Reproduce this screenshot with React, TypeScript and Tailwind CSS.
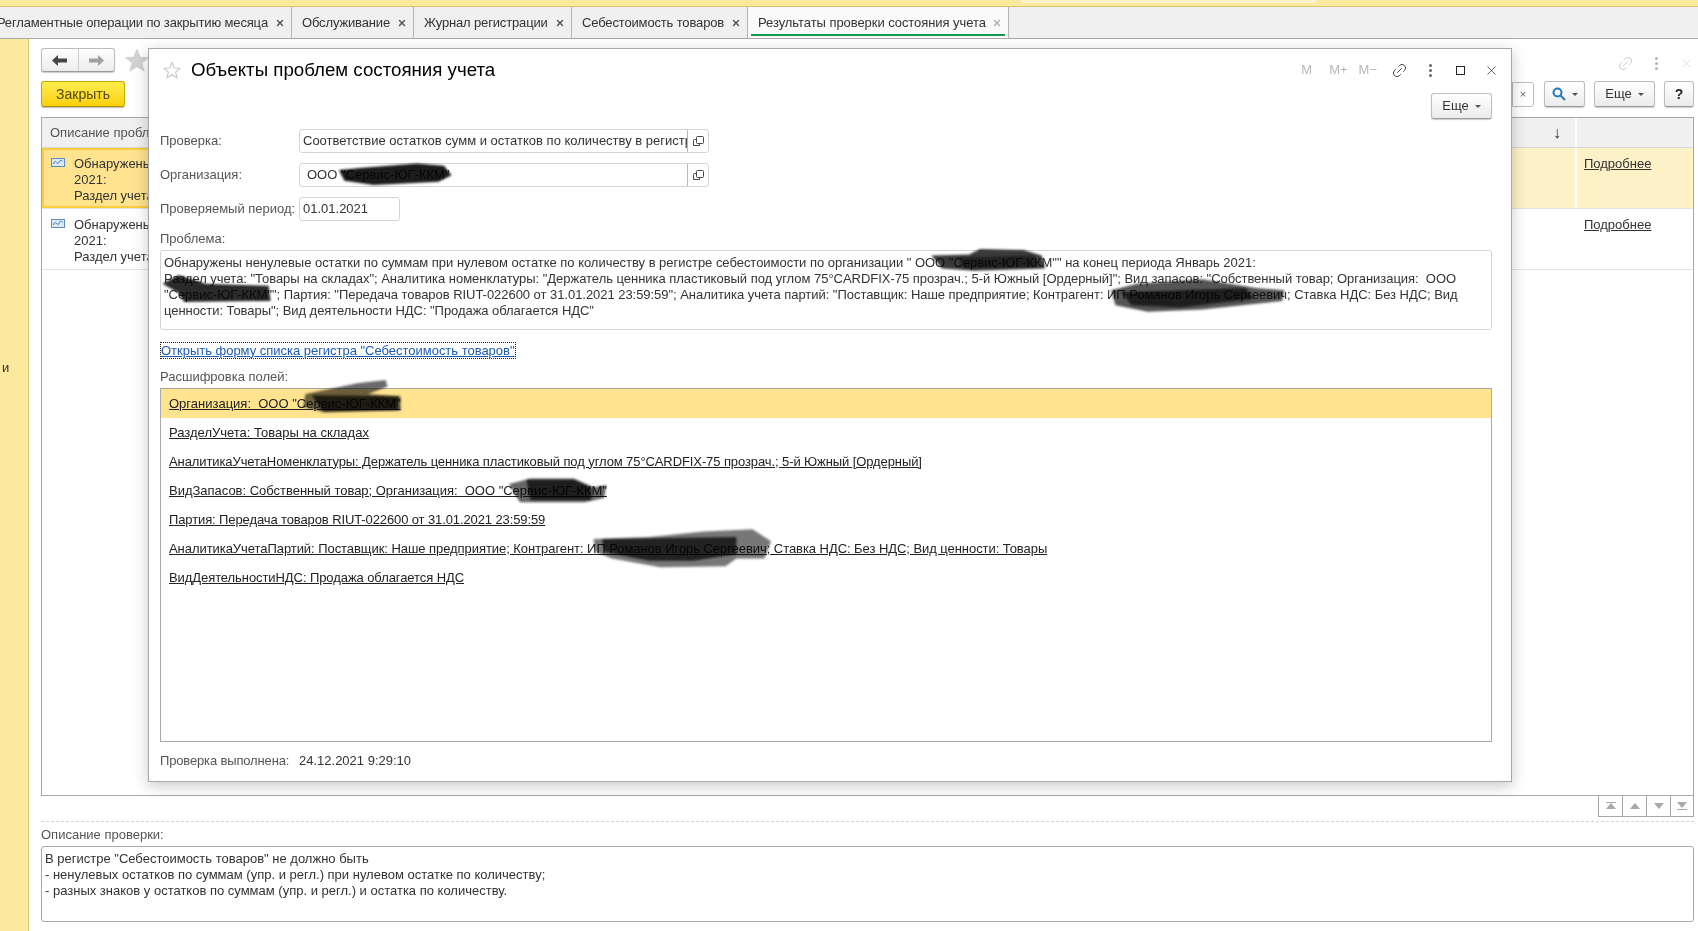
import { Link2, X } from "lucide-react";

const FONT = "font-['Liberation_Sans',Arial,sans-serif]";

const tabs = [
  { label: "Регламентные операции по закрытию месяца", width: "w-[292px] justify-end gap-[7px]" },
  { label: "Обслуживание", width: "w-[122px] justify-between pl-[10px]" },
  { label: "Журнал регистрации", width: "w-[158px] justify-between pl-[10px]" },
  { label: "Себестоимость товаров", width: "w-[176px] justify-between pl-[10px]" },
];

const fieldRows = [
  { text: "Организация:  ООО \"Сервис-ЮГ-ККМ\"", cls: "" },
  { text: "РазделУчета: Товары на складах", cls: "" },
  { text: "АналитикаУчетаНоменклатуры: Держатель ценника пластиковый под углом 75°CARDFIX-75 прозрач.; 5-й Южный [Ордерный]", cls: "tracking-[-0.096px]" },
  { text: "ВидЗапасов: Собственный товар; Организация:  ООО \"Сервис-ЮГ-ККМ\"", cls: "tracking-[-0.017px]" },
  { text: "Партия: Передача товаров RIUT-022600 от 31.01.2021 23:59:59", cls: "tracking-[-0.11px]" },
  { text: "АналитикаУчетаПартий: Поставщик: Наше предприятие; Контрагент: ИП Романов Игорь Сергеевич; Ставка НДС: Без НДС; Вид ценности: Товары", cls: "tracking-[-0.057px]" },
  { text: "ВидДеятельностиНДС: Продажа облагается НДС", cls: "tracking-[-0.077px]" },
];

function StarIcon({ size, fill, stroke }: { size: number; fill: string; stroke: string }) {
  return (
    <svg width={size} height={size} viewBox="0 0 24 24" fill={fill} stroke={stroke} strokeWidth="1.4">
      <path d="M12 2l3 7.2 7.6.6-5.8 5 1.8 7.5L12 18.3l-6.6 4 1.8-7.5-5.8-5 7.6-.6z" />
    </svg>
  );
}

function ThreeDots({ color }: { color: string }) {
  return (
    <span className="flex flex-col gap-[2px]">
      <span className="w-[3px] h-[3px] rounded-full" style={{ backgroundColor: color }} />
      <span className="w-[3px] h-[3px] rounded-full" style={{ backgroundColor: color }} />
      <span className="w-[3px] h-[3px] rounded-full" style={{ backgroundColor: color }} />
    </span>
  );
}

function Caret() {
  return <span className="w-0 h-0 border-x-[3px] border-x-transparent border-t-[3px] border-t-[#555]" />;
}

function GrayButton({ className, children }: { className: string; children: React.ReactNode }) {
  return (
    <div
      className={`flex items-center justify-center rounded-[3px] border border-[#bdbdbd] border-b-[#9a9a9a] bg-gradient-to-b from-white to-[#ececec] shadow-[0_1px_1px_rgba(0,0,0,0.2)] ${className}`}
    >
      {children}
    </div>
  );
}

function OpenIcon() {
  return (
    <svg width="11" height="11" viewBox="0 0 11 11" fill="none" stroke="#444" strokeWidth="1">
      <path d="M3.5 3.5H1.5a1 1 0 0 0-1 1v5h6V8" />
      <rect x="3.5" y="0.5" width="7" height="7" rx="1" />
    </svg>
  );
}

function PagerIcon({ kind }: { kind: "first" | "up" | "down" | "last" }) {
  return (
    <svg width="10" height="8" viewBox="0 0 10 8" fill="#a8a8a8">
      {kind === "first" && <path d="M0 0h10v1H0zM5 1l5 6H0z" />}
      {kind === "up" && <path d="M5 1l5 6H0z" />}
      {kind === "down" && <path d="M0 1h10L5 7z" />}
      {kind === "last" && <path d="M0 0h10L5 6zM0 7h10v1H0z" />}
    </svg>
  );
}

function ProblemRow({ selected }: { selected: boolean }) {
  return (
    <div className={`flex h-[61px] border-b border-[#e4e4e4] ${selected ? "bg-[#fdf1c8]" : "bg-white"}`}>
      <div className={`flex w-[107px] overflow-hidden ${selected ? "h-[60px] border-2 border-r-0 border-[#fbcd3c] bg-[#ffe38f] pl-[7px] pt-[6px]" : "pl-[9px] pt-[8px]"}`}>
        <svg width="14" height="9" viewBox="0 0 14 9" className="mt-[2px] shrink-0">
          <rect x="0.5" y="0.5" width="13" height="8" fill="#dbe8f6" stroke="#5b8fc4" />
          <path d="M2.5 6c1-3 2-3 3-1.500s2 1 3-1 1.500-1 3-.5" fill="none" stroke="#2f6fb0" />
        </svg>
        <div className="ml-[9px] leading-[16px] text-[#333] whitespace-nowrap">
          <div>Обнаружены</div>
          <div>2021:</div>
          <div>Раздел учета</div>
        </div>
      </div>
      <div className="flex-1" />
      <div className="w-[118px] border-l-2 border-white pl-[7px] pt-[6px]">
        <span className="underline text-[#333] leading-[16px]">Подробнее</span>
      </div>
    </div>
  );
}

// marker strokes over the blanked-out names, in the coordinates of the 1568 wide view
function Scribbles() {
  return (
    <svg className="absolute inset-0 w-full h-full pointer-events-none mix-blend-multiply blur-[1px]" viewBox="0 0 1568 860" preserveAspectRatio="none">
      {/* org field */}
      <path d="M313 157L335 155L385 151L410 153L417 162L405 168L345 171L318 167Z" fill="#1c1c1c" />
      {/* problem text, line 1 */}
      <path d="M860 236L895 235L905 230L945 231L962 236L965 248L900 250L870 248Z" fill="#3a3a3a" />
      <path d="M885 238L955 236L958 247L890 248Z" fill="#222" />
      {/* problem text, line 2-3 */}
      <path d="M150 262L165 254L190 262L248 264L250 278L170 279L164 270Z" fill="#2a2a2a" />
      {/* problem text, line 3 right */}
      <path d="M1026 268L1050 262L1110 258L1160 266L1186 268L1184 278L1110 286L1060 288L1030 282Z" fill="#555" />
      <path d="M1035 270L1150 266L1158 276L1090 284L1045 282Z" fill="#1e1e1e" />
      {/* list row 1 */}
      <path d="M282 364L330 354L356 351L358 357L340 364L370 366L370 379L300 381L280 376Z" fill="#6a6a6a" />
      <path d="M288 365L368 366L368 379L298 380Z" fill="#1e1e1e" />
      {/* list row 4 */}
      <path d="M470 447L490 442L530 442L548 450L560 448L558 460L540 464L480 464Z" fill="#666" />
      <path d="M486 443L530 443L546 450L546 462L490 462Z" fill="#1e1e1e" />
      {/* list row 6 */}
      <path d="M548 498L600 496L650 491L695 489L712 500L706 516L680 516L670 523L610 524L565 516L550 510Z" fill="#777" />
      <path d="M556 498L680 496L680 512L640 518L600 518L558 510Z" fill="#222" />
    </svg>
  );
}

export default function App() {
  return (
    <div className={`relative w-[1698px] h-[931px] overflow-hidden bg-white text-[13px] text-[#333] ${FONT}`}>
      {/* Top strip */}
      <div className="relative h-[7px] bg-[#fbe99d] border-b border-[#d6c66f]">
        <div className="absolute left-[1021px] top-0 w-[296px] h-[3px] rounded-b-[2px] bg-[#fdf4cc]" />
      </div>

      {/* Tabs */}
      <div className="flex h-[32px] bg-[#f0f0f0] border-b border-[#a8a8a8]">
        {tabs.map((t) => (
          <div key={t.label} className={`flex shrink-0 items-center pr-[6px] border-r border-[#b4b4b4] whitespace-nowrap ${t.width}`}>
            <span className="tracking-[-0.15px]">{t.label}</span>
            <X size={10} strokeWidth={3.4} className="text-[#555] shrink-0" />
          </div>
        ))}
        <div className="relative flex shrink-0 items-center justify-between w-[261px] h-[31px] pl-[10px] pr-[6px] bg-[#fafafa] border-r border-[#b4b4b4] whitespace-nowrap">
          <span className="tracking-[-0.06px]">Результаты проверки состояния учета</span>
          <X size={10} strokeWidth={3.4} className="text-[#b0b0b0] shrink-0" />
          <div className="absolute left-[3px] right-[3px] bottom-[2px] h-[2px] bg-[#0e9a4a]" />
        </div>
      </div>

      {/* Body */}
      <div className="flex h-[892px]">
        <div className="relative w-[29px] bg-[#fbe99d] border-r border-[#d6c66f]">
          <span className="absolute left-[2px] top-[319px]">и</span>
        </div>

        <div className="flex-1 pl-[12px] pr-[4px] flex flex-col">
          {/* Upper toolbar */}
          <div className="flex items-center h-[24px] mt-[9px]">
            <GrayButton className="w-[74px] h-[24px]">
              <span className="flex-1 flex justify-center border-r border-[#cfcfcf] h-full items-center">
                <svg width="15" height="11" viewBox="0 0 15 11" fill="#444"><path d="M0 5.500L6 0v3.500h9v4H6V11z" /></svg>
              </span>
              <span className="flex-1 flex justify-center h-full items-center">
                <svg width="15" height="11" viewBox="0 0 15 11" fill="#a0a0a0"><path d="M15 5.500L9 0v3.500H0v4h9V11z" /></svg>
              </span>
            </GrayButton>
            <span className="ml-[10px]"><StarIcon size={24} fill="#d2d2d2" stroke="#d2d2d2" /></span>
            <div className="flex-1" />
            <div className="flex items-center text-[#c2c2c2] mt-[6px]">
              <Link2 size={17} strokeWidth={1.2} className="-rotate-45" />
              <span className="ml-[21px]"><ThreeDots color="#b4b4b4" /></span>
              <X size={13} strokeWidth={1} className="ml-[22px] mr-[1px]" />
            </div>
          </div>

          {/* Lower toolbar */}
          <div className="flex items-center h-[26px] mt-[9px]">
            <div className="flex items-center justify-center w-[84px] h-[26px] rounded-[3px] border border-[#c9a800] border-b-[#a89000] bg-gradient-to-b from-[#ffee4a] to-[#fad000] shadow-[0_1px_1px_rgba(0,0,0,0.25)] text-[14px] text-[#554a00]">
              Закрыть
            </div>
            <div className="flex-1" />
            <div className="flex items-center justify-center w-[22px] h-[25px] border border-[#bdbdbd] rounded-r-[3px] text-[#666] text-[11px]">×</div>
            <GrayButton className="w-[41px] h-[26px] ml-[10px] gap-[6px]">
              <svg width="14" height="14" viewBox="0 0 14 14" fill="none" stroke="#2a78b8" strokeWidth="2"><circle cx="5.500" cy="5.500" r="4" /><path d="M8.500 8.500l4.500 4.500" /></svg>
              <Caret />
            </GrayButton>
            <GrayButton className="w-[61px] h-[26px] ml-[9px] gap-[6px]">
              <span>Еще</span>
              <Caret />
            </GrayButton>
            <GrayButton className="w-[30px] h-[26px] ml-[9px] font-bold text-[14px] text-[#222]">?</GrayButton>
          </div>

          {/* Table */}
          <div className="mt-[10px] h-[679px] border border-[#a8a8a8] flex flex-col">
            <div className="flex h-[30px] bg-[#f0f0f0] border-b border-[#d8d8d8]">
              <div className="pl-[8px] pt-[5px] text-[#555] w-[107px] overflow-hidden whitespace-nowrap">Описание проблемы</div>
              <div className="flex-1 flex justify-end items-center pr-[14px] border-r-2 border-white">
                <span className="text-[16px] leading-none">↓</span>
              </div>
              <div className="w-[116px]" />
            </div>
            <ProblemRow selected />
            <ProblemRow selected={false} />
          </div>

          {/* Pager */}
          <div className="flex justify-end h-[21px]">
            {(["first", "up", "down", "last"] as const).map((k) => (
              <div key={k} className="flex items-center justify-center w-[24px] border-l border-b border-[#a8a8a8] last:border-r">
                <PagerIcon kind={k} />
              </div>
            ))}
          </div>

          <div className="mt-[4px] border-t border-dashed border-[#d4d4d4]" />

          <div className="mt-[5px] h-[19px] leading-[16px] text-[#555]">Описание проверки:</div>
          <div className="h-[76px] border border-[#a8a8a8] rounded-[3px] px-[3px] pt-[4px] leading-[16px] text-[#333]">
            <div>В регистре "Себестоимость товаров" не должно быть</div>
            <div>- ненулевых остатков по суммам (упр. и регл.) при нулевом остатке по количеству;</div>
            <div>- разных знаков у остатков по суммам (упр. и регл.) и остатка по количеству.</div>
          </div>
        </div>
      </div>

      {/* Modal */}
      <div className="absolute left-[148px] top-[48px] w-[1364px] h-[734px] bg-white border border-[#a8a8a8] shadow-[0_4px_14px_rgba(0,0,0,0.22)] pl-[11px] pr-[19px] flex flex-col">
        <div className="flex items-center h-[42px]">
          <span className="ml-[3px]"><StarIcon size={18} fill="none" stroke="#c4c4c4" /></span>
          <span className="ml-[10px] text-[18.7px] text-black whitespace-nowrap">Объекты проблем состояния учета</span>
          <div className="flex-1" />
          <div className="flex items-center text-[#b8b8b8] text-[13px]">
            <span>M</span>
            <span className="ml-[17px]">M+</span>
            <span className="ml-[11px]">M−</span>
            <Link2 size={17} strokeWidth={1.2} className="-rotate-45 ml-[14px] text-[#333]" />
            <span className="ml-[21px]"><ThreeDots color="#666" /></span>
            <span className="ml-[24px] w-[9px] h-[9px] border border-[#222]" />
            <X size={15} strokeWidth={1.1} className="ml-[19px] -mr-[7px] text-[#222]" />
          </div>
        </div>

        <div className="flex justify-end mt-[2px]">
          <GrayButton className="w-[61px] h-[26px] gap-[6px]">
            <span>Еще</span>
            <Caret />
          </GrayButton>
        </div>

        {/* Fields */}
        <div className="flex items-center h-[24px] mt-[10px]">
          <span className="w-[139px] text-[#555]">Проверка:</span>
          <div className="flex items-center w-[410px] h-[24px] border border-[#d4d4d4] rounded-[3px]">
            <div className="flex-1 min-w-0 overflow-hidden whitespace-nowrap pl-[3px] text-[#333]">
              Соответствие остатков сумм и остатков по количеству в регистре
            </div>
            <div className="flex items-center justify-center w-[21px] h-full border-l border-[#b8b8b8]">
              <OpenIcon />
            </div>
          </div>
        </div>
        <div className="flex items-center h-[24px] mt-[10px]">
          <span className="w-[139px] text-[#555]">Организация:</span>
          <div className="flex items-center w-[410px] h-[24px] border border-[#d4d4d4] rounded-[3px]">
            <div className="flex-1 whitespace-nowrap pl-[7px] text-[#333]">ООО "Сервис-ЮГ-ККМ"</div>
            <div className="flex items-center justify-center w-[21px] h-full border-l border-[#b8b8b8]">
              <OpenIcon />
            </div>
          </div>
        </div>
        <div className="flex items-center h-[24px] mt-[10px]">
          <span className="w-[139px] text-[#555] whitespace-nowrap">Проверяемый период:</span>
          <div className="flex items-center w-[101px] h-[24px] border border-[#d4d4d4] rounded-[3px] pl-[3px]">01.01.2021</div>
        </div>

        <div className="h-[16px] mt-[10px] leading-[16px] text-[#555]">Проблема:</div>
        <div className="h-[80px] mt-[3px] border border-[#d4d4d4] rounded-[3px] px-[3px] pt-[4px] leading-[16px] whitespace-pre">
          <div className="tracking-[-0.026px]">Обнаружены ненулевые остатки по суммам при нулевом остатке по количеству в регистре себестоимости по организации " ООО "Сервис-ЮГ-ККМ"" на конец периода Январь 2021:</div>
          <div className="tracking-[-0.03px]">Раздел учета: "Товары на складах"; Аналитика номенклатуры: "Держатель ценника пластиковый под углом 75°CARDFIX-75 прозрач.; 5-й Южный [Ордерный]"; Вид запасов: "Собственный товар; Организация:  ООО</div>
          <div className="tracking-[-0.04px]">"Сервис-ЮГ-ККМ""; Партия: "Передача товаров RIUT-022600 от 31.01.2021 23:59:59"; Аналитика учета партий: "Поставщик: Наше предприятие; Контрагент: ИП Романов Игорь Сергеевич; Ставка НДС: Без НДС; Вид</div>
          <div className="tracking-[-0.05px]">ценности: Товары"; Вид деятельности НДС: "Продажа облагается НДС"</div>
        </div>

        <div className="h-[18px] mt-[11px] flex items-center">
          <span className="ml-[1px] underline tracking-[-0.02px] text-[#1c5bb5] outline outline-1 outline-dotted outline-[#222] leading-[15px] whitespace-nowrap">
            Открыть форму списка регистра "Себестоимость товаров"
          </span>
        </div>

        <div className="h-[16px] mt-[10px] leading-[16px] text-[#555]">Расшифровка полей:</div>
        <div className="h-[354px] mt-[3px] border border-[#a8a8a8] flex flex-col">
          {fieldRows.map((row, i) => (
            <div key={row.text} className={`flex items-center h-[29px] pl-[8px] whitespace-pre ${i === 0 ? "bg-[#ffe38f]" : ""}`}>
              <span className={`underline text-[#222] ${row.cls}`}>{row.text}</span>
            </div>
          ))}
        </div>

        <div className="flex items-center h-[20px] mt-[9px] whitespace-nowrap">
          <span className="w-[139px] tracking-[-0.15px] text-[#555]">Проверка выполнена:</span>
          <span>24.12.2021 9:29:10</span>
        </div>
      </div>

      <Scribbles />
    </div>
  );
}
